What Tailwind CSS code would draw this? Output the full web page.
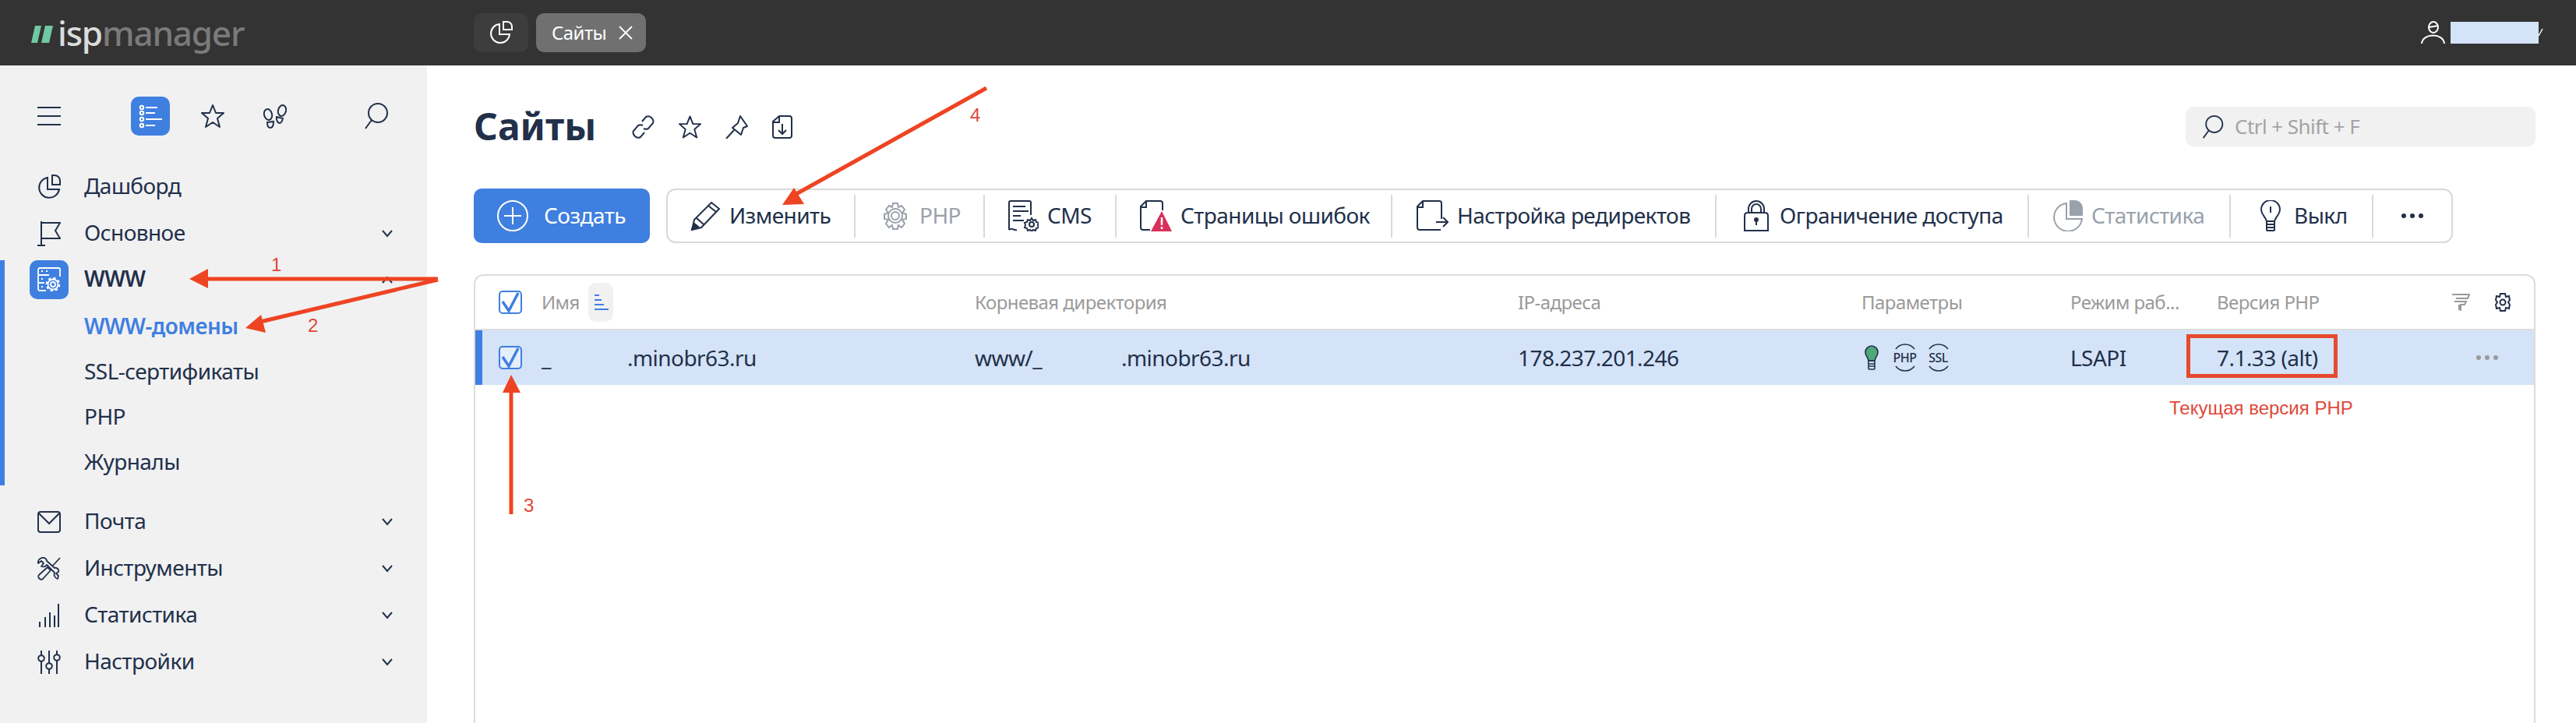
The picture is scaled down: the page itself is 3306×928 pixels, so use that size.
<!DOCTYPE html>
<html lang="ru">
<head>
  <meta charset="UTF-8" />
  <title>Сайты</title>
  <script src="https://cdn.jsdelivr.net/npm/@tailwindcss/browser@4"></script>
</head>
<body class="relative h-[928px] w-[3306px] overflow-hidden bg-white font-['Noto_Sans',sans-serif] text-[28px] tracking-[-0.55px] text-[#22304a]">

  <!-- Top bar -->
  <header class="flex h-[84px] items-center bg-[#333333]">
    <div class="flex w-[608px] items-center pl-[40px]">
      <svg width="28" height="24" viewBox="0 0 28 24" class="mr-[6px] mt-[3px]" fill="#6fc9a3"><path d="M5 1h8L8 23H0zM18 1h10l-5 22H13z"/></svg>
      <span class="text-[44px] font-medium leading-none tracking-[-1.2px] text-[#dcdcdc]">isp<span class="text-[#7a7a7a]">manager</span></span>
    </div>
    <div class="flex h-[50px] w-[70px] items-center justify-center rounded-[10px] bg-[#3d3d3d]">
      <svg width="30" height="30" viewBox="0 0 30 30" fill="none" stroke="#fff" stroke-width="2"><path d="M13 4a12 12 0 1 0 13 13H13zM18 1h5a6 6 0 0 1 6 6v4H18z"/></svg>
    </div>
    <div class="ml-[10px] flex h-[50px] w-[141px] items-center gap-[15px] rounded-[10px] bg-[#707070] pl-[20px] text-[24px] text-white">
      <span>Сайты</span>
      <svg width="20" height="20" viewBox="0 0 20 20" stroke="#fff" stroke-width="1.8"><path d="M2 2l16 16M18 2L2 18"/></svg>
    </div>
    <div class="ml-auto mr-[48px] flex items-center gap-[7px]">
      <svg width="31" height="30" viewBox="0 0 31 30" fill="none" stroke="#fff" stroke-width="2"><ellipse cx="16" cy="8" rx="6" ry="7"/><path d="M10 8l12-2M1 29c1-14 28-14 29 0"/></svg>
      <div class="h-[28px] w-[113px] bg-[#d4e3f8]"></div>
    </div>
  </header>

  <div class="flex h-[844px]">
    <!-- Sidebar -->
    <aside class="w-[548px] shrink-0 bg-[#f1f1f2]">
      <div class="flex h-[126px] items-start pl-[48px] pt-[40px]">
        <div class="mt-[13px] flex h-[24px] w-[30px] flex-col justify-between">
          <div class="h-[2px] bg-[#22304a]"></div><div class="h-[2px] bg-[#22304a]"></div><div class="h-[2px] bg-[#22304a]"></div>
        </div>
        <div class="ml-[90px] flex h-[50px] w-[50px] items-center justify-center rounded-[10px] bg-[#3f7fe0]">
          <svg width="32" height="32" viewBox="0 0 32 32" fill="none" stroke="#fff" stroke-width="2"><circle cx="5" cy="5" r="2.2"/><circle cx="5" cy="12" r="2.2"/><circle cx="5" cy="20" r="2.2"/><circle cx="5" cy="28" r="2.2"/><path d="M10 5h15M10 12h12M10 20h21M10 28h12"/></svg>
        </div>
        <svg width="30" height="30" viewBox="0 0 30 30" class="ml-[40px] mt-[10px]" fill="none" stroke="#22304a" stroke-width="2" stroke-linejoin="round"><path d="M15 1l4 10h10l-8 7 3 11-9-6-9 6 3-11-8-7h10z"/></svg>
        <svg width="30" height="32" viewBox="0 0 30 32" class="ml-[50px] mt-[10px]" fill="none" stroke="#22304a" stroke-width="2"><ellipse cx="6" cy="13" rx="5" ry="7" transform="rotate(-15 6 13)"/><path d="M5 23l8-1c0 5-1 8-4 8s-4-3-4-7z"/><ellipse cx="24" cy="8" rx="5" ry="7" transform="rotate(15 24 8)"/><path d="M17 16l8 2c-1 4-2 6-4 6s-5-3-4-8z"/></svg>
        <svg width="30" height="34" viewBox="0 0 30 34" class="ml-[100px] mt-[8px]" fill="none" stroke="#22304a" stroke-width="2"><ellipse cx="17" cy="13" rx="12" ry="12"/><path d="M9 22L1 33"/></svg>
      </div>

      <nav>
        <a class="flex h-[60px] items-center pl-[48px]">
          <svg width="30" height="32" viewBox="0 0 30 32" class="mr-[30px]" fill="none" stroke="#22304a" stroke-width="2"><path d="M13 4a13 13 0 1 0 15 15H13zM19 1h3a7 7 0 0 1 7 7v5H19z"/></svg>
          <span class="pb-[4px]">Дашборд</span>
        </a>
        <a class="flex h-[60px] items-center pl-[48px] pr-[44px]">
          <svg width="30" height="32" viewBox="0 0 30 32" class="mr-[30px]" fill="none" stroke="#22304a" stroke-width="2"><path d="M5 0v30M0 31h10M5 2h24l-6 10 6 10H5"/></svg>
          <span class="pb-[4px]">Основное</span>
          <svg width="14" height="10" viewBox="0 0 14 10" class="ml-auto" fill="none" stroke="#22304a" stroke-width="2"><path d="M1 1l6 7 6-7"/></svg>
        </a>

        <!-- WWW section -->
        <div class="mt-[4px] h-[289px] border-l-[6px] border-[#3f7fe0]">
          <a class="flex h-[50px] items-center pl-[32px] pr-[44px] font-semibold">
            <span class="mr-[20px] flex h-[50px] w-[50px] items-center justify-center rounded-[10px] bg-[#3f7fe0]">
              <svg width="30" height="32" viewBox="0 0 30 32" fill="none" stroke="#fff" stroke-width="1.8"><path d="M11 30H3a2 2 0 0 1-2-2V3a2 2 0 0 1 2-2h24a2 2 0 0 1 2 2v9M1 10h14M1 20h8M5 5h2M11 5h2M5 15h2M5 25h2"/><circle cx="20" cy="22" r="3"/><circle cx="20" cy="22" r="6.5" fill="#3f7fe0"/><circle cx="20" cy="22" r="8" stroke-width="2.6" stroke-dasharray="3.2 3.1"/><circle cx="20" cy="22" r="3"/></svg>
            </span>
            <span class="pb-[4px]">WWW</span>
            <svg width="14" height="10" viewBox="0 0 14 10" class="ml-auto" fill="none" stroke="#22304a" stroke-width="2"><path d="M1 9l6-7 6 7"/></svg>
          </a>
          <div class="mt-[7px] pl-[102px]">
            <a class="flex h-[58px] items-center pb-[4px] font-semibold text-[#3f7fe0]">WWW-домены</a>
            <a class="flex h-[58px] items-center pb-[4px]">SSL-сертификаты</a>
            <a class="flex h-[58px] items-center pb-[4px]">PHP</a>
            <a class="flex h-[58px] items-center pb-[4px]">Журналы</a>
          </div>
        </div>

        <div class="mt-[17px]">
          <a class="flex h-[60px] items-center pl-[48px] pr-[44px]">
            <svg width="30" height="30" viewBox="0 0 30 30" class="mr-[30px]" fill="none" stroke="#22304a" stroke-width="2"><rect x="1" y="2" width="28" height="26" rx="3"/><path d="M2 4l13 13L28 4"/></svg>
            <span class="pb-[4px]">Почта</span>
            <svg width="14" height="10" viewBox="0 0 14 10" class="ml-auto" fill="none" stroke="#22304a" stroke-width="2"><path d="M1 1l6 7 6-7"/></svg>
          </a>
          <a class="flex h-[60px] items-center pl-[48px] pr-[44px]">
            <svg width="30" height="30" viewBox="0 0 30 30" class="mr-[30px]" fill="none" stroke="#22304a" stroke-width="1.8" stroke-linejoin="round"><path d="M29 1L17 14M13 13l4 4-10 11c-1 1-3 1-4 0l-1-1c-1-1-1-3 0-4z"/><path d="M9 1C4 0 0 4 1 8l4-3 3 3-3 4c3 1 6 0 7-2l10 10c-1 3 0 7 4 8l1-4-3-3 3-2c1-3-2-6-5-5L12 5c0-2-1-3-3-4z" fill="#f1f1f2"/></svg>
            <span class="pb-[4px]">Инструменты</span>
            <svg width="14" height="10" viewBox="0 0 14 10" class="ml-auto" fill="none" stroke="#22304a" stroke-width="2"><path d="M1 1l6 7 6-7"/></svg>
          </a>
          <a class="flex h-[60px] items-center pl-[48px] pr-[44px]">
            <svg width="30" height="30" viewBox="0 0 30 30" class="mr-[30px]" fill="none" stroke="#22304a" stroke-width="2"><path d="M3 30v-7M10 30V17M16 30V11M22 30V15M27 30V0"/></svg>
            <span class="pb-[4px]">Статистика</span>
            <svg width="14" height="10" viewBox="0 0 14 10" class="ml-auto" fill="none" stroke="#22304a" stroke-width="2"><path d="M1 1l6 7 6-7"/></svg>
          </a>
          <a class="flex h-[60px] items-center pl-[48px] pr-[44px]">
            <svg width="30" height="30" viewBox="0 0 30 30" class="mr-[30px]" fill="none" stroke="#22304a" stroke-width="2"><path d="M5 0v6M5 14v16M15 0v16M15 24v6M25 0v5M25 13v17"/><circle cx="5" cy="10" r="3.8"/><circle cx="15" cy="20" r="3.8"/><circle cx="25" cy="9" r="3.8"/></svg>
            <span class="pb-[4px]">Настройки</span>
            <svg width="14" height="10" viewBox="0 0 14 10" class="ml-auto" fill="none" stroke="#22304a" stroke-width="2"><path d="M1 1l6 7 6-7"/></svg>
          </a>
        </div>
      </nav>
    </aside>

    <!-- Main -->
    <main class="flex-1 pl-[60px] pr-[52px]">
      <div class="flex h-[158px] items-start pt-[53px]">
        <h1 class="w-[203px] text-[48px] font-bold leading-[50px] tracking-normal">Сайты</h1>
        <div class="flex gap-[31px] pt-[11px]">
          <svg width="29" height="30" viewBox="0 0 29 30" fill="none" stroke="#22304a" stroke-width="2"><path d="M13 8l5-6c2-1 5-1 7 1s3 5 2 7l-6 7c-2 1-4 1-6 0M16 22l-5 6c-2 1-5 1-7-1s-3-5-2-7l6-7c2-1 4-1 6 0"/></svg>
          <svg width="29" height="30" viewBox="0 0 30 30" fill="none" stroke="#22304a" stroke-width="2" stroke-linejoin="round"><path d="M15 1l4 10h10l-8 7 3 11-9-6-9 6 3-11-8-7h10z"/></svg>
          <svg width="29" height="30" viewBox="0 0 29 30" fill="none" stroke="#22304a" stroke-width="2" stroke-linejoin="round"><path d="M19 1l9 13-5 2-3 9-11-9 7-6zM11 19L1 30"/></svg>
          <svg width="26" height="30" viewBox="0 0 26 30" fill="none" stroke="#22304a" stroke-width="2"><path d="M9 1h13a3 3 0 0 1 3 3v22a3 3 0 0 1-3 3H4a3 3 0 0 1-3-3V8zM1 9h8V1M13 11v13M8 19l5 5 5-5"/></svg>
        </div>
        <div class="ml-auto flex h-[51px] w-[449px] items-center gap-[13px] rounded-[10px] bg-[#f1f1f2] pl-[20px] text-[26px] text-[#a3a3a3]">
          <svg width="30" height="30" viewBox="0 0 30 34" fill="none" stroke="#22304a" stroke-width="2"><ellipse cx="17" cy="13" rx="12" ry="12"/><path d="M9 22L1 33"/></svg>
          <span>Ctrl + Shift + F</span>
        </div>
      </div>

      <!-- Toolbar -->
      <div class="flex h-[70px] items-stretch">
        <button class="flex w-[226px] items-center gap-[20px] rounded-[10px] bg-[#3f7fe0] pl-[30px] text-white">
          <svg width="40" height="40" viewBox="0 0 40 40" fill="none" stroke="#fff" stroke-width="2"><circle cx="20" cy="20" r="19"/><path d="M20 9v22M9 20h22"/></svg>
          <span class="pb-[3px]">Создать</span>
        </button>
        <div class="ml-[21px] flex w-[2293px] items-center rounded-[12px] border-2 border-[#d9d9d9] bg-white">
          <div class="flex h-[55px] w-[241px] items-center gap-[11px] border-r-2 border-[#d9d9d9] pl-[29px]">
            <svg width="39" height="38" viewBox="0 0 39 38" fill="none" stroke="#22304a" stroke-width="2"><path d="M27 2l10 8-23 24-12 3 3-13zM23 6l10 8M8 22l9 8"/><path d="M2 37l3-8 5 4z" fill="#22304a"/></svg>
            <span class="pb-[3px]">Изменить</span>
          </div>
          <div class="flex h-[55px] w-[166px] items-center gap-[15px] border-r-2 border-[#d9d9d9] pl-[35px] text-[#9aa1ab]">
            <svg width="32" height="36" viewBox="0 0 32 36" fill="none" stroke="#9aa1ab" stroke-width="2"><circle cx="16" cy="18" r="5"/><circle cx="16" cy="18" r="9"/><path d="M13 2h6l1 5 4-2 4 5-3 4 5 2v6l-5 1 3 5-4 5-4-3-1 5h-6l-1-5-4 3-4-5 3-5-5-1v-6l5-2-3-4 4-5 4 2z"/></svg>
            <span class="pb-[3px]">PHP</span>
          </div>
          <div class="flex h-[55px] w-[169px] items-center gap-[11px] border-r-2 border-[#d9d9d9] pl-[30px]">
            <svg width="39" height="40" viewBox="0 0 39 40" fill="none" stroke="#22304a" stroke-width="2"><path d="M1 38V3a2 2 0 0 1 2-2h24a2 2 0 0 1 2 2v16M1 38c4-4 6 2 10 0M6 8h16M6 14h20M6 20h10M6 26h14"/><circle cx="30" cy="31" r="3"/><path d="M30 23l2 3 3-1 1 3 3 1-1 3 1 3-3 1-1 3-3-1-2 2-2-2-3 1-1-3-3-1 1-3-1-3 3-1 1-3 3 1z" fill="#fff"/><circle cx="30" cy="31" r="3"/></svg>
            <span class="pb-[3px]">CMS</span>
          </div>
          <div class="flex h-[55px] w-[354px] items-center gap-[11px] border-r-2 border-[#d9d9d9] pl-[30px]">
            <svg width="41" height="40" viewBox="0 0 41 40" fill="none"><path d="M13 38H4a3 3 0 0 1-3-3V8l7-7h18a3 3 0 0 1 3 3v9M1 9h7V1" stroke="#22304a" stroke-width="2"/><path d="M28 14l13 26H14z" fill="#d8305a"/><path d="M28 22v10M28 34v3" stroke="#fff" stroke-width="2.5"/></svg>
            <span class="pb-[3px]">Страницы ошибок</span>
          </div>
          <div class="flex h-[55px] w-[416px] items-center gap-[11px] border-r-2 border-[#d9d9d9] pl-[31px]">
            <svg width="41" height="40" viewBox="0 0 41 40" fill="none" stroke="#22304a" stroke-width="2"><path d="M31 38H4a3 3 0 0 1-3-3V8l7-7h21a3 3 0 0 1 3 3v20M1 9h7V1M25 28h15M34 22l6 6-6 6"/></svg>
            <span class="pb-[3px]">Настройка редиректов</span>
          </div>
          <div class="flex h-[55px] w-[401px] items-center gap-[14px] border-r-2 border-[#d9d9d9] pl-[35px]">
            <svg width="32" height="40" viewBox="0 0 32 40" fill="none" stroke="#22304a" stroke-width="2"><path d="M1 39V20c0-2 1-4 4-4h22c3 0 4 2 4 4v19zM6 16V11a10 10 0 0 1 20 0v5M10 16V11a6 6 0 0 1 12 0v5"/><circle cx="16" cy="25" r="2" fill="#22304a"/><path d="M16 26v6"/></svg>
            <span class="pb-[3px]">Ограничение доступа</span>
          </div>
          <div class="flex h-[55px] w-[259px] items-center gap-[11px] border-r-2 border-[#d9d9d9] pl-[31px] text-[#9aa1ab]">
            <svg width="38" height="40" viewBox="0 0 38 40" fill="none" stroke="#9aa1ab" stroke-width="2"><path d="M17 4a18 18 0 1 0 20 20H17z"/><path d="M22 1h6a9 9 0 0 1 9 9v9H22z" fill="#9aa1ab"/></svg>
            <span class="pb-[3px]">Статистика</span>
          </div>
          <div class="flex h-[55px] w-[183px] items-center gap-[17px] border-r-2 border-[#d9d9d9] pl-[38px]">
            <svg width="26" height="40" viewBox="0 0 26 40" fill="none" stroke="#22304a" stroke-width="2"><path d="M8 27C6 20 1 19 1 12a12 12 0 0 1 24 0c0 7-5 8-7 15zM8 27h10v11a1 1 0 0 1-1 1H9a1 1 0 0 1-1-1zM8 31h10M8 35h10M13 8v8"/></svg>
            <span class="pb-[3px]">Выкл</span>
          </div>
          <div class="flex flex-1 items-center justify-center gap-[5px]">
            <div class="h-[6px] w-[6px] rounded-full bg-[#22304a]"></div><div class="h-[6px] w-[6px] rounded-full bg-[#22304a]"></div><div class="h-[6px] w-[6px] rounded-full bg-[#22304a]"></div>
          </div>
        </div>
      </div>

      <!-- Table -->
      <div class="mt-[40px] h-[600px] rounded-t-[12px] border-2 border-b-0 border-[#dcdcdc]">
        <div class="flex h-[70px] items-center border-b-2 border-[#dcdcdc] text-[24px] text-[#9a9a9a]">
          <div class="flex w-[85px] shrink-0 justify-start pl-[30px]">
            <div class="flex h-[30px] w-[30px] items-center justify-center rounded-[5px] border-2 border-[#3f7fe0]">
              <svg width="26" height="26" viewBox="0 0 26 26" fill="none" stroke="#3f7fe0" stroke-width="3.5"><path d="M3 12l8 12L23 1"/></svg>
            </div>
          </div>
          <div class="flex w-[556px] shrink-0 items-center">
            <span class="w-[60px]">Имя</span>
            <div class="flex h-[50px] w-[32px] items-center justify-center rounded-[10px] bg-[#f1f1f2]">
              <svg width="20" height="22" viewBox="0 0 20 22" fill="none" stroke="#3f7fe0" stroke-width="2"><path d="M2 2h6M2 8h9M2 14h12M2 20h18"/></svg>
            </div>
          </div>
          <span class="w-[697px] shrink-0">Корневая директория</span>
          <span class="w-[441px] shrink-0">IP-адреса</span>
          <span class="w-[268px] shrink-0">Параметры</span>
          <span class="w-[188px] shrink-0">Режим раб...</span>
          <span class="w-[301px] shrink-0">Версия PHP</span>
          <svg width="24" height="22" viewBox="0 0 24 22" fill="none" stroke="#9a9a9a" stroke-width="2"><path d="M1 1h22l-2 5H6M4 10h15l-2 4h-5v7l-2-1v-6"/></svg>
          <svg width="20" height="24" viewBox="0 0 20 24" class="ml-[32px]" fill="none" stroke="#22304a" stroke-width="2"><circle cx="10" cy="12" r="3.5"/><path d="M7 1h6l1 4 4-1 1 5-2 3 2 3-1 5-4-1-1 4H7l-1-4-4 1-1-5 2-3-2-3 1-5 4 1z"/></svg>
        </div>
        <div class="flex h-[70px] items-center border-l-[9px] border-[#3f7fe0] bg-[#d4e3f8]">
          <div class="flex w-[76px] shrink-0 justify-start pl-[21px]">
            <div class="flex h-[30px] w-[30px] items-center justify-center rounded-[5px] border-2 border-[#3f7fe0] bg-white/40">
              <svg width="26" height="26" viewBox="0 0 26 26" fill="none" stroke="#3f7fe0" stroke-width="3.5"><path d="M3 12l8 12L23 1"/></svg>
            </div>
          </div>
          <span class="w-[110px] shrink-0">_</span>
          <span class="w-[446px] shrink-0">.minobr63.ru</span>
          <span class="w-[188px] shrink-0">www/_</span>
          <span class="w-[509px] shrink-0">.minobr63.ru</span>
          <span class="w-[441px] shrink-0">178.237.201.246</span>
          <div class="flex w-[268px] shrink-0 items-center gap-[16px] pl-[4px]">
            <svg width="18" height="32" viewBox="0 0 18 32" fill="none" stroke="#22304a" stroke-width="1.6"><path d="M5 20C4 15 1 14 1 9a8 8 0 0 1 16 0c0 5-3 6-4 11z" fill="#4fa87a"/><path d="M5 20h8v10a1 1 0 0 1-1 1H6a1 1 0 0 1-1-1zM5 24h8M5 27h8"/></svg>
            <div class="flex w-[35px] flex-col items-center text-[16px] leading-none">
              <svg width="26" height="8" viewBox="0 0 26 8" fill="none" stroke="#22304a" stroke-width="1.5"><path d="M1 7c6-8 18-8 24 0"/></svg>
              <span class="my-[2px] font-medium">PHP</span>
              <svg width="26" height="8" viewBox="0 0 26 8" fill="none" stroke="#22304a" stroke-width="1.5"><path d="M1 1c6 8 18 8 24 0"/></svg>
            </div>
            <div class="-ml-[8px] flex w-[35px] flex-col items-center text-[16px] leading-none">
              <svg width="26" height="8" viewBox="0 0 26 8" fill="none" stroke="#22304a" stroke-width="1.5"><path d="M1 7c6-8 18-8 24 0"/></svg>
              <span class="my-[2px] font-medium">SSL</span>
              <svg width="26" height="8" viewBox="0 0 26 8" fill="none" stroke="#22304a" stroke-width="1.5"><path d="M1 1c6 8 18 8 24 0"/></svg>
            </div>
          </div>
          <span class="w-[188px] shrink-0">LSAPI</span>
          <span class="w-[333px] shrink-0">7.1.33 (alt)</span>
          <div class="flex items-center gap-[5px]">
            <div class="h-[6px] w-[6px] rounded-full bg-[#9a9a9a]"></div><div class="h-[6px] w-[6px] rounded-full bg-[#9a9a9a]"></div><div class="h-[6px] w-[6px] rounded-full bg-[#9a9a9a]"></div>
          </div>
        </div>
      </div>
    </main>
  </div>

  <!-- Red annotations over the screenshot -->
  <div class="absolute left-[2806px] top-[429px] h-[56px] w-[194px] border-[5px] border-[#e64a2e]"></div>
  <span class="absolute left-[2784px] top-[510px] font-['Liberation_Sans',sans-serif] text-[24px] leading-[28px] tracking-normal text-[#e0483a]">Текущая версия PHP</span>
  <span class="absolute left-[348px] top-[326px] font-['Liberation_Sans',sans-serif] text-[24px] leading-[28px] text-[#e0483a]">1</span>
  <span class="absolute left-[395px] top-[404px] font-['Liberation_Sans',sans-serif] text-[24px] leading-[28px] text-[#e0483a]">2</span>
  <span class="absolute left-[672px] top-[635px] font-['Liberation_Sans',sans-serif] text-[24px] leading-[28px] text-[#e0483a]">3</span>
  <span class="absolute left-[1245px] top-[134px] font-['Liberation_Sans',sans-serif] text-[24px] leading-[28px] text-[#e0483a]">4</span>
  <svg class="pointer-events-none absolute left-0 top-0" width="3306" height="928" viewBox="0 0 3306 928" fill="#ee4423" stroke="#ee4423" stroke-width="5">
    <path d="M562 358H260M562 359L330 414M656 660V495M1266 113L1020 250" fill="none"/>
    <path d="M243 358l24-13v25zM315 421l20-17 6 23zM656 481l-11 23h23zM1004 263l15-22 13 21z" stroke="none"/>
    <path d="M3258 46l5-9" stroke="#fff" stroke-width="1.5" fill="none"/>
  </svg>
</body>
</html>
